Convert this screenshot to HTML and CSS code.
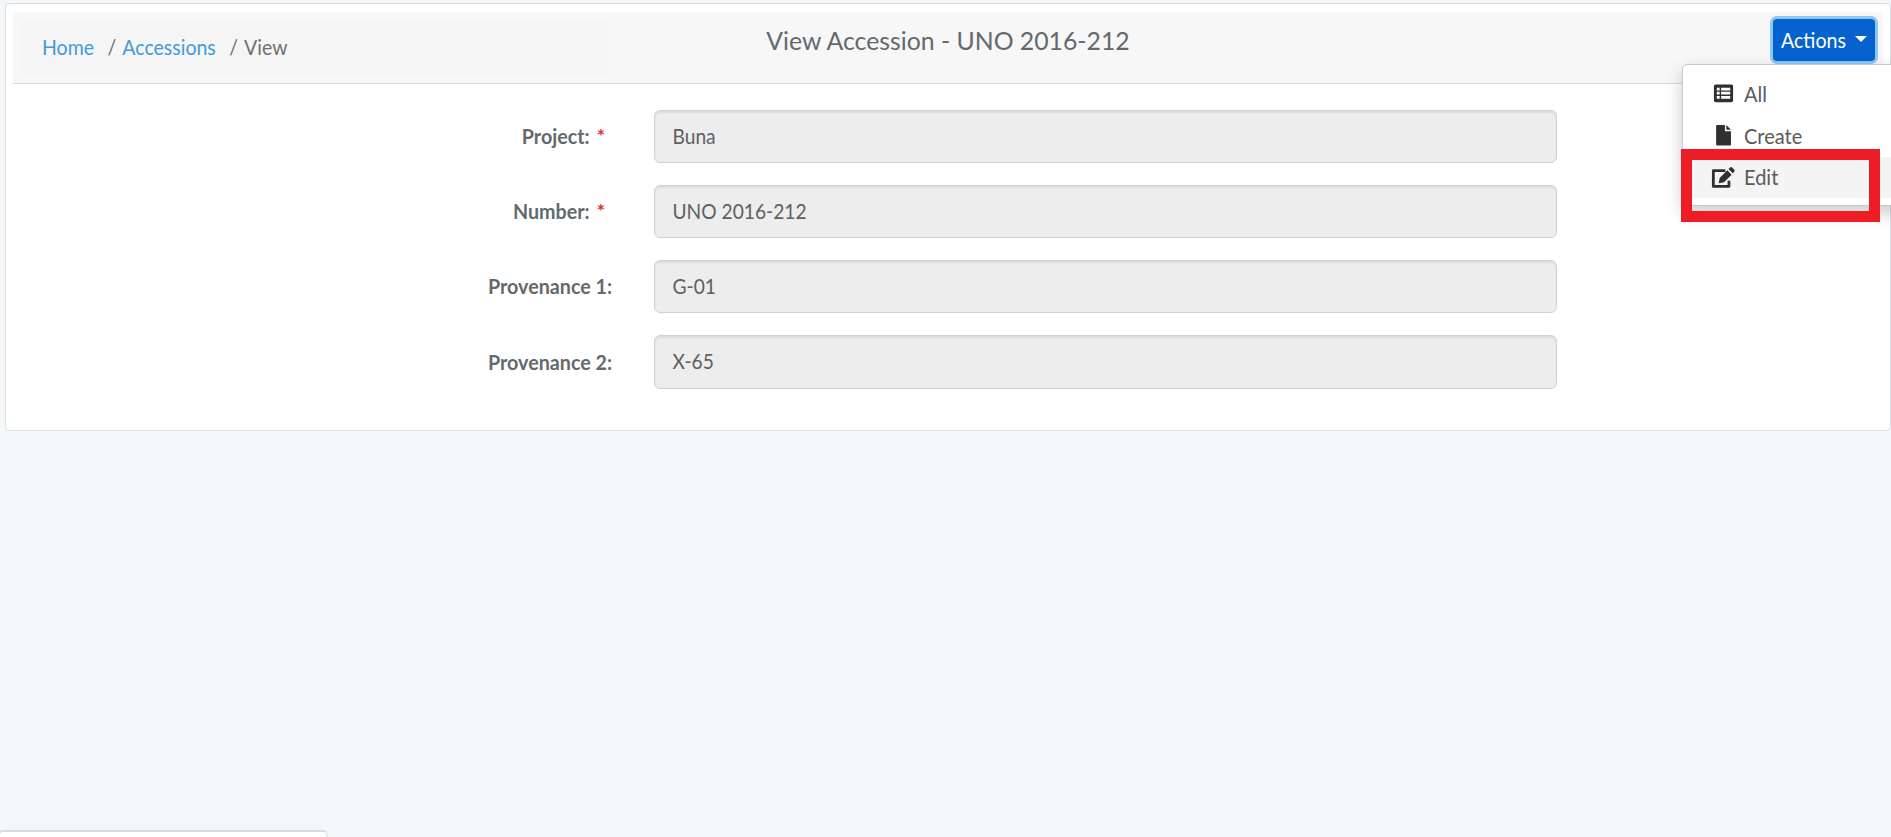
FILE: index.html
```
<!DOCTYPE html>
<html lang="en">
<head>
<meta charset="utf-8">
<title>View Accession</title>
<link rel="stylesheet" href="styles.css">
</head>
<body>
<main class="card">
  <header class="card-header">
    <nav class="breadcrumb"><a>Home</a><span class="sep">/</span><a>Accessions</a><span class="sep">/</span><span>View</span></nav>
    <h1 class="title">View Accession - UNO 2016-212</h1>
    <div class="actions">
      <button class="btn"><span>Actions</span><i class="caret"></i></button>
      <div class="menu">
        <a class="item"><svg class="icon" viewBox="0 0 24 24"><rect x="2" y="2.500" width="20" height="18.500" rx="1.800" fill="#303030"/><path fill="#fff" d="M5 6h3v2.800H5zm4.500 0H19v2.800H9.500zM5 10.300h3v2.800H5zm4.500 0H19v2.800H9.500zM5 14.600h3v2.800H5zm4.500 0H19v2.800H9.500z"/></svg><span>All</span></a>
        <a class="item"><svg class="icon" viewBox="0 0 24 24"><path fill="#303030" d="M5.300 1h8.200v6.500h6.300v14a1 1 0 0 1-1 1H5.300a1 1 0 0 1-1-1V2a1 1 0 0 1 1-1zM15 1l4.800 5H15z"/></svg><span>Create</span></a>
        <a class="item active"><svg class="icon" viewBox="0 0 24 24"><path fill="none" stroke="#303030" stroke-width="2.900" stroke-linejoin="round" d="M14 4.800H1.400v16.500h16.300v-6"/><path fill="#303030" d="M7 18l1-5.500 8-8 4.500 4.500-8 8zM17.200 3.200l1.600-1.600a1.500 1.500 0 0 1 2.200 0l2.200 2.200a1.500 1.500 0 0 1 0 2.200l-1.500 1.600z"/></svg><span>Edit</span></a>
      </div>
      <div class="highlight"></div>
    </div>
  </header>
  <form class="form">
    <div class="row"><label class="label req"><span>Project:</span><b>*</b></label><div class="field"><span>Buna</span></div></div>
    <div class="row"><label class="label req"><span>Number:</span><b>*</b></label><div class="field"><span>UNO 2016-212</span></div></div>
    <div class="row"><label class="label"><span>Provenance 1:</span></label><div class="field"><span>G-01</span></div></div>
    <div class="row last"><label class="label"><span>Provenance 2:</span></label><div class="field"><span>X-65</span></div></div>
  </form>
</main>
<div class="status"></div>
</body>
</html>
```
FILE: styles.css
```
* { box-sizing: border-box; }
body {
  margin: 0;
  height: 837px;
  padding: 3px 0 0 5px;
  overflow: hidden;
  position: relative;
  background: #f3f7fa;
  color: #63696d;
  font-family: Lato, sans-serif;
  font-size: 19.500px;
  line-height: 30px;
}
.card {
  width: 1886px;
  height: 428px;
  padding: 8px 7px;
  border: 1px solid #dcdfe0;
  border-radius: 4px;
  background: #fff;
}
.card-header {
  display: grid;
  grid-template-columns: 609px 652px 1fr;
  height: 72px;
  background: #f7f7f7;
  border-bottom: 1px solid #d8dddf;
}
.breadcrumb {
  display: flex;
  margin: 8px 13px 8px 9px;
  padding: 11.500px 20px;
  border-radius: 5px;
  background: #f5f5f5;
  color: #707070;
}
.breadcrumb a { color: #3f9bdc; }
.breadcrumb > *, .btn span, .item span, .label span, .field span {
  display: inline-block;
  transform: scaleY(1.09);
}
.sep { margin: 0 6px 0 13.500px; }
.title {
  margin: 13px 0 0;
  font-size: 24.800px;
  font-weight: 400;
  line-height: 32px;
  text-align: center;
  white-space: nowrap;
}
.actions { position: relative; padding: 7px 8px 0 0; display: flex; justify-content: flex-end; align-items: flex-start; }
.btn {
  display: flex;
  align-items: center;
  justify-content: space-between;
  width: 102px;
  height: 42px;
  padding: 0 8px;
  border: 0;
  border-radius: 4px;
  box-shadow: 0 0 0 3px #8fc5f5;
  background: #0562cf;
  color: #fff;
  font: 19.600px/30px Lato, sans-serif;
}
.caret { border: 6px solid transparent; border-top-color: #fff; border-bottom: 0; margin-top: -3px; }
.menu {
  position: absolute;
  left: 408px;
  top: 52px;
  width: 230px;
  height: 142px;
  padding: 8px 0;
  border: 1px solid #c9c9c9;
  border-radius: 5px;
  background: #fff;
  box-shadow: 0 7px 18px rgba(0, 0, 0, .2);
  color: #5a5a5a;
  font-size: 20px;
}
.item { display: flex; align-items: center; height: 42px; padding: 0 0 1px 29px; gap: 9px; }
.item span { margin-top: -2px; }
.item.active { background: #f4f4f4; height: 41px; }
.icon { width: 23px; height: 23px; overflow: visible; }
.highlight { position: absolute; left: 407px; top: 137px; width: 199px; height: 73px; border: 11px solid #ee1c24; }
.form { display: flex; flex-direction: column; gap: 22px; padding-top: 26px; }
.row { display: flex; height: 53px; align-items: center; }
.row.last, .last .field { height: 54px; }
.label { width: 641px; padding: 0 42px 1px 0; text-align: right; font-size: 19.700px; font-weight: 700; }
.req { padding-right: 49px; }
.label b { margin-left: 7px; color: #e8302c; font-weight: 700; }
.field {
  width: 903px;
  height: 53px;
  padding: 10px 17.500px;
  border: 1px solid #cdd3d4;
  border-radius: 6px;
  background: #ededed;
  box-shadow: inset 0 2px 2px rgba(0, 0, 0, .07);
  color: #606060;
  font-size: 19.200px;
}
.status {
  position: absolute;
  left: -2px;
  bottom: -4px;
  width: 330px;
  height: 11px;
  border: 2px solid #d9dbdc;
  border-right-color: #e9ebec;
  border-radius: 5px;
  background: #fff;
}
```
